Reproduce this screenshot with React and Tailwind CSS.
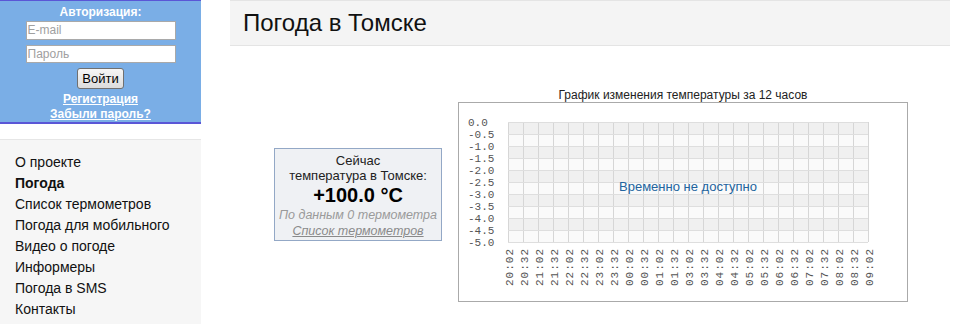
import React from 'react';

const menu = [
  { label: 'О проекте' },
  { label: 'Погода', active: true },
  { label: 'Список термометров' },
  { label: 'Погода для мобильного' },
  { label: 'Видео о погоде' },
  { label: 'Информеры' },
  { label: 'Погода в SMS' },
  { label: 'Контакты' },
];

const yLabels = ['0.0', '-0.5', '-1.0', '-1.5', '-2.0', '-2.5', '-3.0', '-3.5', '-4.0', '-4.5', '-5.0'];
const xLabels = [
  '20:02', '20:32', '21:02', '21:32', '22:02', '22:32', '23:02', '23:32', '00:02', '00:32', '01:02', '01:32',
  '03:02', '03:32', '04:02', '04:32', '05:02', '05:32', '06:02', '06:32', '07:02', '07:32', '08:02', '08:32', '09:02',
];

const LoginBox = () => (
  <div className="h-[124px] bg-[#7aaee6] border-t border-b-2 border-[#5a56d6] flex flex-col items-center text-white">
    <div className="text-[12px] font-bold leading-[14px] mt-[4px]">Авторизация:</div>
    <input
      placeholder="E-mail"
      className="mt-[2px] w-[150px] h-[19px] bg-white border border-[#a9a9a9] px-[1px] text-[12px] text-black placeholder:text-[#a0a0a0] outline-none"
    />
    <input
      placeholder="Пароль"
      type="password"
      className="mt-[5px] w-[150px] h-[19px] bg-white border border-[#a9a9a9] px-[1px] text-[12px] text-black placeholder:text-[#a0a0a0] outline-none"
    />
    <button className="mt-[5px] w-[47px] h-[21px] rounded-[3px] border border-[#707070] bg-gradient-to-b from-[#f6f6f6] to-[#dcdcdc] text-[13px] text-black leading-none">
      Войти
    </button>
    <a href="#" className="mt-[3px] text-[12px] font-bold underline leading-[15px]">Регистрация</a>
    <a href="#" className="text-[12px] font-bold underline leading-[15px]">Забыли пароль?</a>
  </div>
);

const Sidebar = () => (
  <aside className="w-[201px] shrink-0 flex flex-col">
    <LoginBox />
    <div className="h-[15px]" />
    <nav className="flex-1 bg-[#f6f6f6] border-t border-[#e6e6e6] pt-[12px] pl-[15px]">
      {menu.map((item) => (
        <div
          key={item.label}
          className={`text-[14px] leading-[21px] text-[#111] ${item.active ? 'font-bold' : ''}`}
        >
          {item.label}
        </div>
      ))}
    </nav>
  </aside>
);

const NowBox = () => (
  <div className="mt-[102px] w-[168px] h-[93px] border border-[#93a8c6] bg-[#eff1f4] flex flex-col items-center pt-[4px] text-[13px] text-[#222]">
    <div className="leading-[15px]">Сейчас</div>
    <div className="leading-[15px]">температура в Томске:</div>
    <div className="text-[20px] font-bold leading-[24px] text-black">+100.0 °C</div>
    <div className="italic text-[12.5px] leading-[16px] text-[#9a9a9a]">По данным 0 термометра</div>
    <a href="#" className="italic underline text-[12.5px] leading-[16px] text-[#8a8a8a]">Список термометров</a>
  </div>
);

const Chart = () => {
  const gx = 49;
  const gy = 19;
  const cw = 15;
  const rh = 12;
  return (
    <div className="ml-[16px] mt-[42px] flex flex-col items-center">
      <div className="text-[12px] leading-[14px] text-[#222]">График изменения температуры за 12 часов</div>
      <div className="w-[450px] h-[200px] border border-[#aaaaaa] bg-white">
        <svg width="448" height="198" className="block">
          {Array.from({ length: 10 }).map((_, i) => (
            <rect key={i} x={gx} y={gy + i * rh} width={cw * 24} height={rh} fill={i % 2 === 0 ? '#f0f0f0' : '#fafafa'} />
          ))}
          {Array.from({ length: 25 }).map((_, i) => (
            <line key={`v${i}`} x1={gx + i * cw + 0.5} y1={gy} x2={gx + i * cw + 0.5} y2={gy + 10 * rh} stroke="#d6d6d6" />
          ))}
          {Array.from({ length: 11 }).map((_, i) => (
            <line key={`h${i}`} x1={gx} y1={gy + i * rh + 0.5} x2={gx + 24 * cw} y2={gy + i * rh + 0.5} stroke="#dedede" />
          ))}
          {yLabels.map((l, i) => (
            <text key={l} x="9" y={23 + i * rh} fontFamily="'Liberation Mono', monospace" fontSize="11" fill="#555">
              {l}
            </text>
          ))}
          {xLabels.map((l, i) => {
            const x = gx + i * cw + 5;
            return (
              <text
                key={l}
                x={x}
                y={145}
                transform={`rotate(-90 ${x} 145)`}
                textAnchor="end"
                fontFamily="'Liberation Mono', monospace"
                fontSize="11"
                letterSpacing="1"
                fill="#555"
              >
                {l}
              </text>
            );
          })}
          <text x="229" y="88" textAnchor="middle" fontFamily="'Liberation Sans', Arial, sans-serif" fontSize="13" fill="#23649e">
            Временно не доступно
          </text>
        </svg>
      </div>
    </div>
  );
};

export default function App() {
  return (
    <div className="w-[953px] h-[324px] overflow-hidden bg-white flex font-['Liberation_Sans',Arial,sans-serif]">
      <Sidebar />
      <main className="flex-1 ml-[29px] mr-[3px] flex flex-col">
        <header className="h-[46px] bg-[#f4f4f4] border-t border-b border-[#e4e4e4] flex items-center pl-[13px]">
          <h1 className="text-[24px] leading-none text-[#111]">Погода в Томске</h1>
        </header>
        <div className="flex items-start pl-[44px]">
          <NowBox />
          <Chart />
        </div>
      </main>
    </div>
  );
}
